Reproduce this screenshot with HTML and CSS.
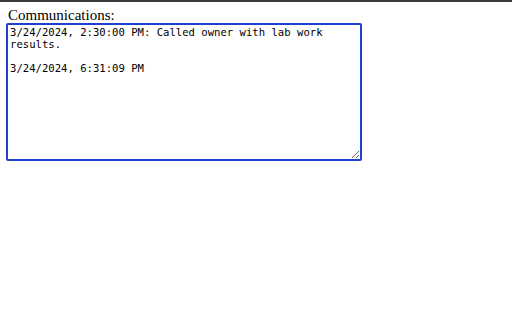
FILE: index.html
```html
<!DOCTYPE html>
<html>
	<head>
		<meta charset="UTF-8" />
		<link rel="stylesheet" href="styles.css">
	</head>
	<body>
	<div class="top-bar"></div>
	<div class="main">
		<label class="label" for="commsId">Communications:</label>
		<textarea class="comms" id="commsId" autofocus>3/24/2024, 2:30:00 PM: Called owner with lab work results.

3/24/2024, 6:31:09 PM</textarea>
	</div>
	<script>
		let comms = document.getElementById('commsId');
		comms.focus();
		comms.setSelectionRange(comms.value.length, comms.value.length);
	</script>
	</body>
</html>
```
FILE: styles.css
```css
html, body {
	margin: 0;
	background: #fff;
}

.top-bar {
	height: 2px;
	background-color: #3a3a3a;
}

.main {
	padding: 5px 6px;
	font-family: "Liberation Serif", serif;
	font-size: 15px;
	color: #000;
}

.label {
	display: block;
	padding-left: 2px;
	line-height: 16px;
}

.comms {
	display: block;
	box-sizing: border-box;
	width: 356px;
	height: 138px;
	margin: 0;
	padding: 1px 2px;
	border: 2px solid #1f3fce;
	border-radius: 2px;
	outline: none;
	font-family: "DejaVu Sans Mono", monospace;
	font-size: 10.6px;
	line-height: 12px;
	color: #000;
	caret-color: #000;
	resize: both;
}
```
